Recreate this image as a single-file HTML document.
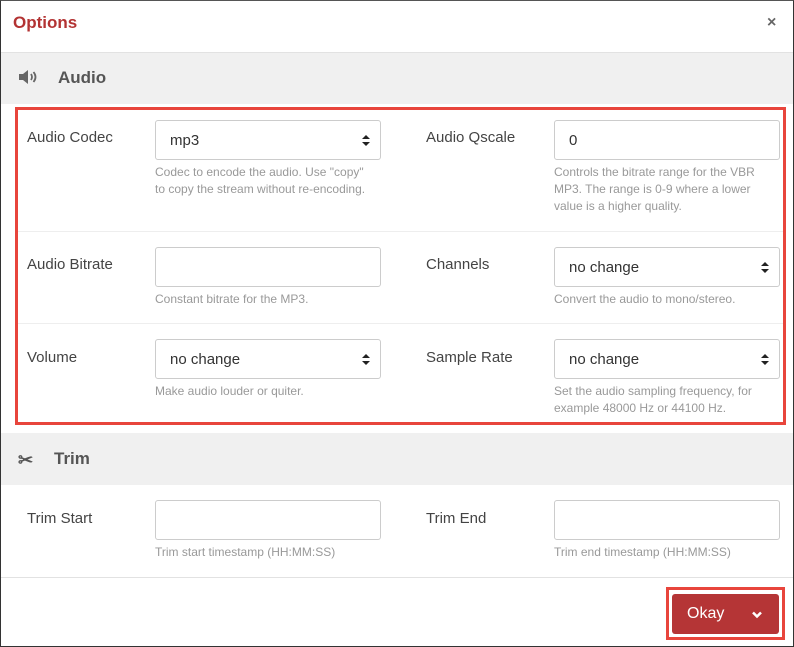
<!DOCTYPE html><html><head><style>
*{box-sizing:border-box;margin:0;padding:0}
body{width:794px;height:647px;position:relative;background:#fff;font-family:"Liberation Sans",sans-serif;color:#444;overflow:hidden}
.a{position:absolute}
.frame{left:0;top:0;width:794px;height:647px;border:1px solid #333;border-top:1px solid #555}
.lbl{font-size:15px;color:#444}
.in{position:absolute;width:226px;height:40px;border:1px solid #ccc;border-radius:3px;background:#fff;font-size:15px;color:#333;padding:11px 14px}
.arr{position:absolute;right:10px;top:13px;width:8px;height:13px}
.help{position:absolute;font-size:12px;color:#999;line-height:17px;width:226px}
.sec{left:1px;width:792px;background:#f0f0f0}
.st{font-size:17px;font-weight:bold;color:#555}
.hr{left:18px;width:765px;height:1px;background:#eee}
</style></head><body>
<div class="a frame"></div>
<div class="a" style="left:13px;top:13px;font-size:17px;font-weight:bold;color:#b33333">Options</div>
<div class="a" style="left:767px;top:14px;font-size:16px;font-weight:bold;color:#666">×</div>
<div class="a sec" style="top:52px;height:52px;border-top:1px solid #e2e2e2"></div>
<svg class="a" style="left:18px;top:69px" width="22" height="16" viewBox="0 0 22 16"><path d="M1 5h4l5-4v14l-5-4H1z" fill="#666"/><path d="M13 5q2 3 0 6M15.5 3q4 5 0 10" stroke="#666" stroke-width="1.8" fill="none"/></svg>
<div class="a st" style="left:58px;top:68px">Audio</div>
<div class="a" style="left:15px;top:107px;width:771px;height:318px;border:3px solid #e8453c"></div>
<div class="a hr" style="top:231px"></div>
<div class="a hr" style="top:323px"></div>

<div class="a lbl" style="left:27px;top:129px">Audio Codec</div>
<div class="in" style="left:155px;top:120px">mp3<svg class="arr" viewBox="0 0 8 13"><path d="M0 5L4 1L8 5zM0 8L4 12L8 8z" fill="#222"/></svg></div>
<div class="help" style="left:155px;top:164px">Codec to encode the audio. Use "copy"<br>to copy the stream without re-encoding.</div>
<div class="a lbl" style="left:426px;top:129px">Audio Qscale</div>
<div class="in" style="left:554px;top:120px">0</div>
<div class="help" style="left:554px;top:164px">Controls the bitrate range for the VBR<br>MP3. The range is 0-9 where a lower<br>value is a higher quality.</div>

<div class="a lbl" style="left:27px;top:256px">Audio Bitrate</div>
<div class="in" style="left:155px;top:247px"></div>
<div class="help" style="left:155px;top:291px">Constant bitrate for the MP3.</div>
<div class="a lbl" style="left:426px;top:256px">Channels</div>
<div class="in" style="left:554px;top:247px">no change<svg class="arr" viewBox="0 0 8 13"><path d="M0 5L4 1L8 5zM0 8L4 12L8 8z" fill="#222"/></svg></div>
<div class="help" style="left:554px;top:291px">Convert the audio to mono/stereo.</div>

<div class="a lbl" style="left:27px;top:349px">Volume</div>
<div class="in" style="left:155px;top:339px">no change<svg class="arr" viewBox="0 0 8 13"><path d="M0 5L4 1L8 5zM0 8L4 12L8 8z" fill="#222"/></svg></div>
<div class="help" style="left:155px;top:383px">Make audio louder or quiter.</div>
<div class="a lbl" style="left:426px;top:349px">Sample Rate</div>
<div class="in" style="left:554px;top:339px">no change<svg class="arr" viewBox="0 0 8 13"><path d="M0 5L4 1L8 5zM0 8L4 12L8 8z" fill="#222"/></svg></div>
<div class="help" style="left:554px;top:383px">Set the audio sampling frequency, for<br>example 48000 Hz or 44100 Hz.</div>

<div class="a sec" style="top:433px;height:52px"></div>
<div class="a" style="left:18px;top:450px;font-size:18px;font-weight:bold;color:#555">✂</div>
<div class="a st" style="left:54px;top:449px">Trim</div>

<div class="a lbl" style="left:27px;top:510px">Trim Start</div>
<div class="in" style="left:155px;top:500px"></div>
<div class="help" style="left:155px;top:544px">Trim start timestamp (HH:MM:SS)</div>
<div class="a lbl" style="left:426px;top:510px">Trim End</div>
<div class="in" style="left:554px;top:500px"></div>
<div class="help" style="left:554px;top:544px">Trim end timestamp (HH:MM:SS)</div>

<div class="a" style="left:1px;top:577px;width:792px;height:1px;background:#e2e2e2"></div>
<div class="a" style="left:666px;top:587px;width:119px;height:53px;border:3px solid #e8453c"></div>
<div class="a" style="left:672px;top:594px;width:107px;height:40px;background:#b53536;border-radius:3px;color:#fff;font-size:16px;padding:11px 15px">Okay<svg class="a" style="left:80px;top:17px" width="10" height="8" viewBox="0 0 10 8"><path d="M1 1.5L5 5.5L9 1.5" stroke="#fff" stroke-width="2.5" fill="none"/></svg></div>
</body></html>
